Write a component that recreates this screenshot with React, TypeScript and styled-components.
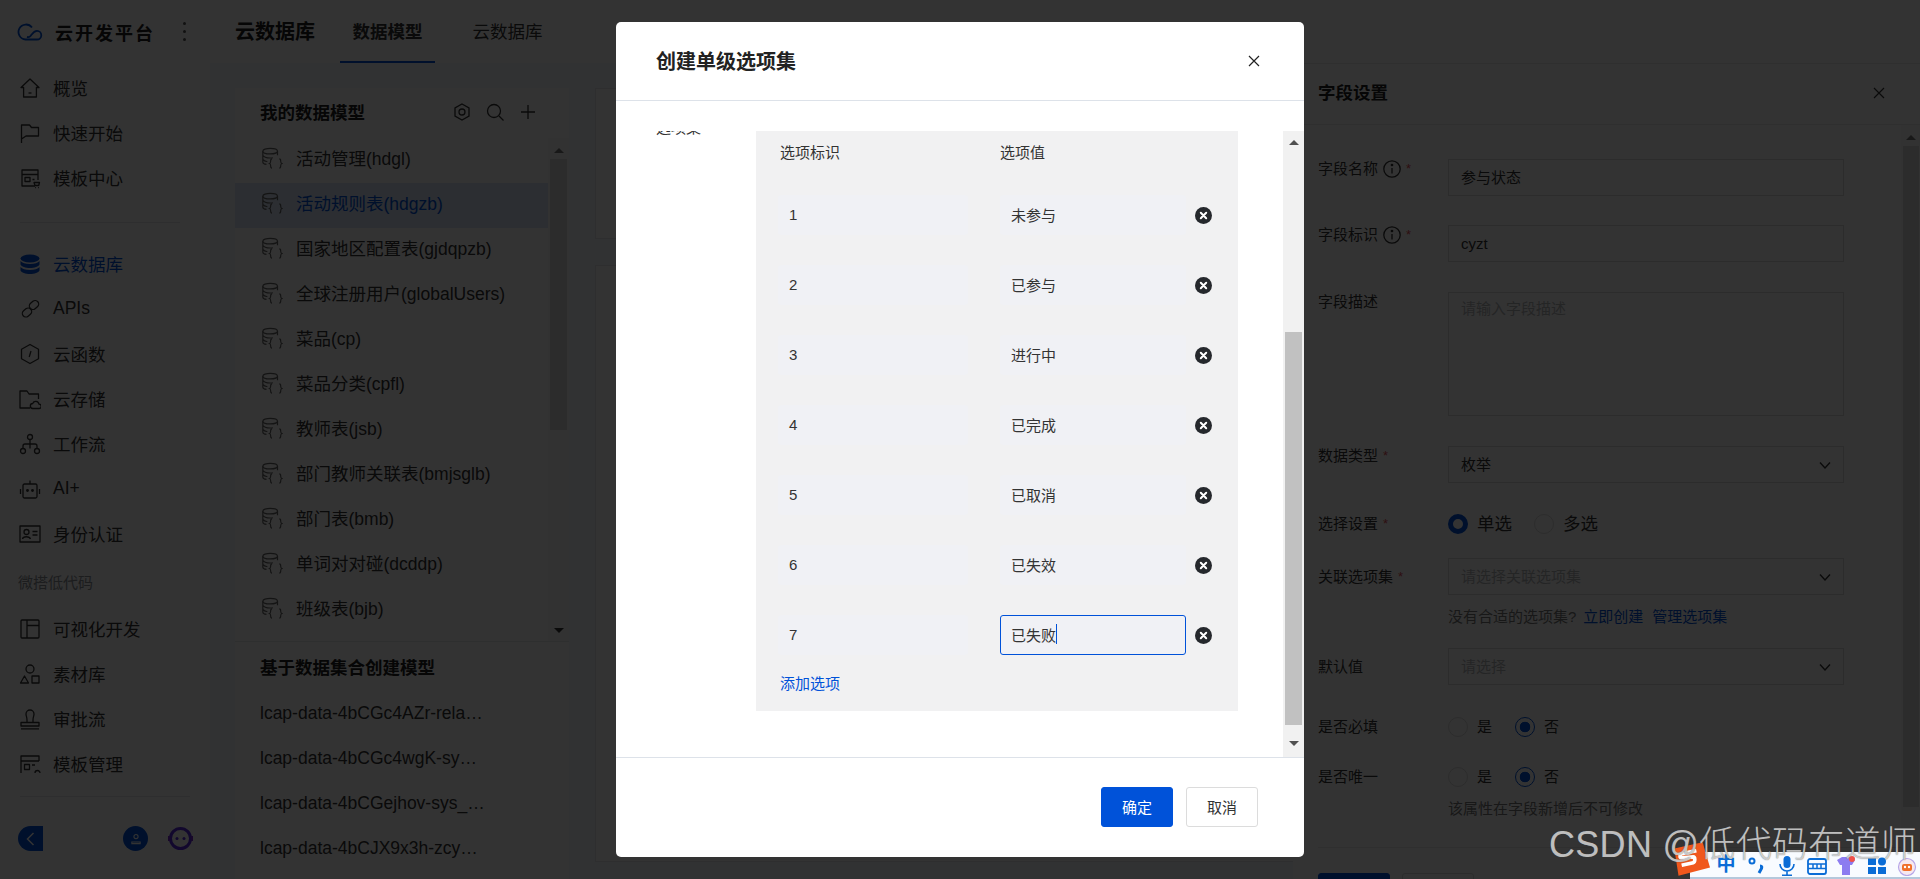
import React from "react";
import styled, { createGlobalStyle } from "styled-components";

const Global = createGlobalStyle`
  html, body { margin: 0; padding: 0; background: #fff; }
  * { box-sizing: border-box; }
  body { font-family: "Liberation Sans", "Noto Sans CJK SC", sans-serif; color: #333; overflow: hidden; }
`;

const Page = styled.div`
  position: relative; width: 1920px; height: 879px; overflow: hidden; display: flex; background: #f4f7fc;
`;
const Sidebar = styled.aside`
  width: 210px; height: 879px; flex: none; background: #fff; display: flex; flex-direction: column;
`;
const Brand = styled.div`
  height: 63px; flex: none; display: flex; align-items: center; padding-left: 17px; position: relative;
`;
const BrandName = styled.span`
  margin-left: 12px; font-size: 18px; font-weight: 700; letter-spacing: 2px; color: #222;
`;
const BrandDots = styled.span`
  margin-left: 28px; display: flex; flex-direction: column; gap: 5px;
  i { width: 3px; height: 3px; border-radius: 50%; background: #555; display: block; }
`;
const NavGroup = styled.nav<{ $top: number }>`
  margin-top: ${(p) => p.$top}px; display: flex; flex-direction: column; flex: none;
`;
const NavItem = styled.div<{ $active?: boolean }>`
  height: 45px; display: flex; align-items: center; padding-left: 19px; font-size: 17.5px;
  color: ${(p) => (p.$active ? "#0052d9" : "#333")};
  svg { width: 22px; height: 22px; flex: none; margin-right: 12px; }
`;
const SideRule = styled.div<{ $w: number; $top: number }>`
  width: ${(p) => p.$w}px; height: 1px; margin: ${(p) => p.$top}px 0 0 20px; background: #e3e6eb; flex: none;
`;
const NavLabel = styled.div`
  margin: 17px 0 0 18px; height: 20px; line-height: 20px; font-size: 15px; color: #8c8f96; flex: none;
`;
const SideFoot = styled.div`
  margin-top: 29px; height: 25px; display: flex; align-items: center; padding-left: 18px; flex: none;
`;
const Collapse = styled.div`
  width: 25px; height: 25px; background: #0052d9; border-radius: 12.5px 0 0 12.5px; display: flex; align-items: center; justify-content: center;
`;
const UserDot = styled.div`
  margin-left: 80px; width: 25px; height: 25px; border-radius: 50%; background: #0052d9; display: flex; align-items: center; justify-content: center;
`;
const RobotDot = styled.div`
  margin-left: 20px; width: 25px; height: 25px;
`;
const Main = styled.main`
  flex: 1; display: flex; flex-direction: column; min-width: 0;
`;
const TopBar = styled.header`
  height: 63px; flex: none; background: #fff; display: flex; align-items: stretch; padding-left: 25px;
`;
const TopTitle = styled.div`
  font-size: 20px; font-weight: 700; color: #222; display: flex; align-items: center; margin-right: 25px; padding-bottom: 2px;
`;
const TopTab = styled.div<{ $on?: boolean }>`
  width: 95px; margin-right: 25px; display: flex; align-items: center; justify-content: center; font-size: 17.5px; padding-bottom: 1px;
  font-weight: ${(p) => (p.$on ? 700 : 400)}; color: #333;
  border-bottom: 2px solid ${(p) => (p.$on ? "#0052d9" : "transparent")};
`;
const Content = styled.div`
  flex: 1; display: flex; padding: 25px 0 0 25px; gap: 26px; min-height: 0;
`;
const ModelPanel = styled.section`
  width: 334px; flex: none; background: #fff; display: flex; flex-direction: column;
`;
const PanelHead = styled.div`
  height: 50px; flex: none; display: flex; align-items: center; padding: 0 31px 3px 25px;
  font-size: 17.5px; font-weight: 700; color: #222;
  span { flex: 1; }
  svg { width: 20px; height: 20px; margin-left: 13px; }
`;
const ListWrap = styled.div`
  height: 504px; flex: none; display: flex; border-bottom: 1px solid #e6e8ec;
`;
const ListRows = styled.div`
  flex: 1; min-width: 0; overflow: hidden;
`;
const ModelRow = styled.div<{ $on?: boolean }>`
  height: 45px; display: flex; align-items: center; padding: 0 0 6px 26px; font-size: 17.5px;
  background: ${(p) => (p.$on ? "#d9e6f9" : "transparent")};
  color: ${(p) => (p.$on ? "#0052d9" : "#333")};
  svg { width: 22px; height: 22px; margin-right: 13px; flex: none; }
`;
const Track = styled.div<{ $w: number; $bg: string }>`
  width: ${(p) => p.$w}px; flex: none; background: ${(p) => p.$bg}; display: flex; flex-direction: column; align-items: center; position: relative;
`;
const Thumb = styled.div<{ $w: number; $top: number; $h: number; $bg: string }>`
  position: absolute; top: ${(p) => p.$top}px; left: 50%; margin-left: ${(p) => -p.$w / 2}px;
  width: ${(p) => p.$w}px; height: ${(p) => p.$h}px; background: ${(p) => p.$bg};
`;
const Arrow = styled.div<{ $dir: "up" | "down"; $top: number; $c: string }>`
  position: absolute; top: ${(p) => p.$top}px; left: 50%; margin-left: -5px; width: 0; height: 0;
  border-left: 5px solid transparent; border-right: 5px solid transparent;
  ${(p) => (p.$dir === "up" ? `border-bottom: 5px solid ${p.$c};` : `border-top: 5px solid ${p.$c};`)}
`;
const DataHead = styled.div`
  height: 49px; flex: none; display: flex; align-items: center; padding-left: 25px; font-size: 17.5px; font-weight: 700; color: #222;
`;
const DataRow = styled.div`
  height: 45px; line-height: 45px; padding-left: 25px; font-size: 17.5px; color: #333; white-space: nowrap; flex: none;
`;
const Center = styled.div`
  flex: 1; display: flex; flex-direction: column; gap: 26px;
`;
const Card = styled.div<{ $h: number }>`
  height: ${(p) => p.$h}px; background: #fff; border: 1px solid #e3e6eb; flex: none;
`;
const Drawer = styled.aside`
  position: absolute; left: 1293px; top: 63px; right: 0; bottom: 0; background: #fff; border-top: 1px solid #e8e8e8;
  display: flex; flex-direction: column;
`;
const DrawerHead = styled.div`
  height: 61px; flex: none; border-bottom: 1px solid #e8e8e8; padding: 0 35px 5px 25px; display: flex; align-items: center; justify-content: space-between;
  font-size: 17.5px; font-weight: 700; color: #222;
  svg { margin-top: 2px; }
`;
const DrawerBody = styled.div`
  flex: 1; display: flex; min-height: 0;
`;
const Form = styled.div`
  width: 608px; flex: none; padding: 34px 0 0 25px; display: flex; flex-direction: column;
`;
const Field = styled.div<{ $gap: number; $top?: boolean }>`
  margin-top: ${(p) => p.$gap}px; display: flex; align-items: ${(p) => (p.$top ? "flex-start" : "center")}; flex: none;
`;
const Label = styled.div`
  width: 130px; flex: none; font-size: 15px; line-height: 20px; color: #333; display: flex; align-items: center;
  b { color: #e34d59; font-weight: 400; margin-left: 5px; font-size: 13px; }
  svg { width: 18px; height: 18px; margin-left: 5px; flex: none; }
`;
const FInput = styled.div<{ $h?: number; $ph?: boolean }>`
  width: 396px; height: ${(p) => p.$h ?? 37}px; border: 1px solid #dcdcdc; padding: ${(p) => (p.$h ? "6px" : "0")} 12px 0; flex: none;
  display: flex; align-items: ${(p) => (p.$h ? "flex-start" : "center")}; justify-content: space-between;
  font-size: 15px; line-height: 20px; color: ${(p) => (p.$ph ? "#b5b7bb" : "#333")};
  svg { width: 14px; height: 14px; margin-right: -1px; }
`;
const Radio = styled.span<{ $on?: boolean; $thick?: boolean }>`
  width: 20px; height: 20px; border-radius: 50%; flex: none; display: inline-block; background: #fff;
  border: ${(p) => (p.$thick ? "5px solid #0052d9" : p.$on ? "1px solid #0052d9" : "1px solid #dcdcdc")};
  ${(p) => p.$on && !p.$thick && "background: radial-gradient(circle, #0052d9 0 5px, #fff 5.6px);"}
`;
const RadioText = styled.span<{ $big?: boolean }>`
  font-size: ${(p) => (p.$big ? 17.5 : 15)}px; margin: 0 ${(p) => (p.$big ? 22 : 23)}px 0 9px; color: #333; line-height: 20px;
`;
const Hint = styled.div<{ $gap: number }>`
  margin: ${(p) => p.$gap}px 0 0 130px; font-size: 15px; line-height: 20px; color: #777; flex: none;
  a { color: #0052d9; margin-left: 7px; }
  a + a { margin-left: 9px; }
`;
const FormRule = styled.div`
  margin-top: 28px; height: 1px; width: 583px; background: #e8e8e8; flex: none;
`;
const FormBtns = styled.div`
  margin-top: 25px; display: flex; gap: 12px; flex: none;
`;
const Button = styled.div<{ $primary?: boolean; $w: number }>`
  width: ${(p) => p.$w}px; height: 40px; flex: none; border-radius: 3px; display: flex; align-items: center; justify-content: center; font-size: 15px; padding-bottom: 1px;
  background: ${(p) => (p.$primary ? "#0052d9" : "#fff")};
  color: ${(p) => (p.$primary ? "#fff" : "#333")};
  border: 1px solid ${(p) => (p.$primary ? "#0052d9" : "#dcdcdc")};
`;
const Overlay = styled.div`
  position: absolute; inset: 0; background: rgba(0, 0, 0, 0.8);
`;
const Modal = styled.div`
  position: absolute; left: 616px; top: 22px; width: 688px; height: 835px; background: #fff; border-radius: 5px; overflow: hidden;
  display: flex; flex-direction: column;
`;
const ModalHead = styled.div`
  height: 79px; flex: none; border-bottom: 1px solid #dde2e9; padding: 0 44px 2px 40px; display: flex; align-items: center; justify-content: space-between;
  font-size: 20px; font-weight: 700; color: #222;
  svg { width: 12px; height: 12px; margin-top: 2px; }
`;
const ModalBody = styled.div`
  height: 656px; flex: none; padding-top: 30px; display: flex;
`;
const Scrolled = styled.div`
  flex: 1; min-width: 0; overflow: hidden; display: flex;
`;
const SetLabel = styled.div`
  width: 140px; flex: none; padding-left: 40px; margin-top: -13px; height: 20px; line-height: 20px; font-size: 15px; color: #333;
  b { color: #e34d59; font-weight: 400; margin-left: 4px; font-size: 13px; }
`;
const OptionPanel = styled.div`
  width: 482px; height: 580px; flex: none; background: #f1f1f2; padding-left: 22px; display: flex; flex-direction: column;
`;
const OptionHead = styled.div`
  height: 40px; margin-bottom: 9px; flex: none; display: flex; align-items: center; font-size: 15px; color: #333; padding-left: 2px;
  span { width: 220px; }
`;
const OptionRow = styled.div`
  height: 70px; flex: none; display: flex; align-items: center;
`;
const OptionInput = styled.div<{ $w: number; $focus?: boolean; $ml?: number }>`
  width: ${(p) => p.$w}px; height: 40px; flex: none; margin-left: ${(p) => p.$ml ?? 0}px; background: #f0f1f5; border-radius: 3px; display: flex; align-items: center;
  padding: 0 0 2px 10px; font-size: 15px; color: #333;
  border: 1px solid ${(p) => (p.$focus ? "#0052d9" : "transparent")};
`;
const Caret = styled.i`
  width: 1px; height: 20px; background: #0052d9; display: block;
`;
const Remove = styled.svg`
  width: 17px; height: 17px; margin-left: 9px; flex: none;
`;
const AddLink = styled.div`
  height: 24px; margin-top: 2px; line-height: 24px; padding-left: 2px; font-size: 15px; color: #0052d9;
`;
const ModalFoot = styled.div`
  flex: 1; border-top: 1px solid #dde2e9; display: flex; justify-content: flex-end; gap: 13px; padding: 29px 46px 0 0;
`;
const Watermark = styled.div`
  position: absolute; left: 1549px; top: 822px; font-size: 36px; line-height: 46px; font-weight: 300; white-space: nowrap;
  font-family: "Liberation Sans", "Noto Sans CJK SC", sans-serif; color: rgba(255, 255, 255, 0.68); text-shadow: 0 0 1px rgba(70, 70, 70, 0.9);
  letter-spacing: 0.3px; z-index: 3;
`;
const ImeBar = styled.div`
  position: absolute; left: 1690px; right: 0; top: 852px; bottom: 0; background: #f8fbff; border-bottom: 2px solid #b4c8dc; z-index: 2;
`;
const ImeTools = styled.div`
  position: absolute; left: 1668px; top: 842px; width: 252px; height: 37px; display: flex; align-items: center; z-index: 2;
`;
const ImeLogo = styled.svg`
  width: 42px; height: 34px; flex: none; margin-top: -3px;
`;
const ImeChar = styled.span`
  margin-left: 6px; width: 20px; font-size: 19px; font-weight: 700; color: #0a6cd6; line-height: 20px; text-align: center; padding-top: 8px;
`;
const ImeIcon = styled.svg<{ $ml: number }>`
  width: 20px; height: 20px; flex: none; margin: 11px 0 0 ${(p) => p.$ml}px;
`;

const S = { fill: "none", stroke: "currentColor", strokeWidth: 1.3, strokeLinejoin: "round" as const };
const nav: Record<string, React.ReactNode> = {
  home: <svg viewBox="0 0 22 22" {...S}><path d="M11 2l9 8.5h-2.6V20H4.6v-9.500H2z" /><path d="M9.500 16h3" /></svg>,
  flag: <svg viewBox="0 0 22 22" {...S}><path d="M2.500 21V3h8l2 2.500h7V14H7l-4.500 3" /></svg>,
  tpl: <svg viewBox="0 0 22 22" {...S}><path d="M16 19H3V3h16v10" /><path d="M3 7.500h16M6 10.500h5v4H6zM13.500 12.500h2" /><path d="M15 15.500h5.500l-.8 3H16zM16 20.600h.8M19 20.600h.8" /></svg>,
  db: <svg viewBox="0 0 22 22" fill="#0052d9"><ellipse cx="11" cy="5.500" rx="9.500" ry="4" /><path d="M1.500 8c1.500 2 5 3 9.500 3s8-1 9.500-3v3.500c-1 2.200-5 3.500-9.500 3.500s-8.500-1.300-9.500-3.500zM1.500 14c1.500 2 5 3 9.500 3s8-1 9.500-3v3.500c-1 2.200-5 3.500-9.500 3.500s-8.500-1.300-9.500-3.500z" /></svg>,
  link: <svg viewBox="0 0 22 22" {...S}><rect x="10" y="3.500" width="10" height="7" rx="3.500" transform="rotate(-40 15 7)" /><rect x="3" y="11" width="10" height="7" rx="3.500" transform="rotate(-40 8 14.500)" /></svg>,
  fn: <svg viewBox="0 0 22 22" {...S}><path d="M11 1.500l8.500 4.800v9.400L11 20.500l-8.500-4.800V6.300z" /><path d="M12 8l-1.800 6" /></svg>,
  folder: <svg viewBox="0 0 22 22" {...S}><path d="M11 20H1V3h7l2 3h9.500v5" /><path d="M14 20.500a2.500 2.500 0 0 1-.3-5 3.300 3.300 0 0 1 6.300.6 2.200 2.200 0 0 1 0 4.400z" /></svg>,
  flow: <svg viewBox="0 0 22 22" {...S}><circle cx="11" cy="4" r="2.500" /><circle cx="4" cy="18" r="2.500" /><circle cx="18" cy="18" r="2.500" /><path d="M11 6.500V15.500M4 15.500v-2.500a2 2 0 0 1 2-2h10a2 2 0 0 1 2 2v2.500" /></svg>,
  bot: <svg viewBox="0 0 22 22" {...S}><rect x="4" y="6" width="14" height="14" rx="1.500" /><path d="M11 6V2.500M1.500 11v5M20.500 11v5" /><circle cx="8.500" cy="12.500" r=".8" fill="currentColor" /><circle cx="13.500" cy="12.500" r=".8" fill="currentColor" /></svg>,
  card: <svg viewBox="0 0 22 22" {...S}><rect x="1" y="3" width="20" height="16" /><circle cx="7.500" cy="9" r="2.500" /><path d="M3.500 16c.5-3 7-3 8 0M13.500 8.500h5M13.500 12h5" /></svg>,
  panel: <svg viewBox="0 0 22 22" {...S}><rect x="2" y="2" width="18" height="18" rx="1" /><path d="M8 2v18M8 7.500h12" /></svg>,
  shape: <svg viewBox="0 0 22 22" {...S}><circle cx="11" cy="6" r="4" /><path d="M5.500 13L9.500 20H1.500zM13 13h7v7h-7z" /></svg>,
  stamp: <svg viewBox="0 0 22 22" {...S}><path d="M2 14.500h18V18H2zM8 14.500V12C8 9 7 8 7 6a4 4 0 0 1 8 0c0 2-1 3-1 6v2.500M2 20.800h18" /></svg>,
  tpl2: <svg viewBox="0 0 22 22" {...S}><path d="M2 20V3h18v5M2 8h18M5.500 11.500h5v5h-5zM13 12h3" /><path d="M16 20a2.500 2.500 0 0 1 5 0" /></svg>,
};

const ModelIcon = () => (
  <svg viewBox="0 0 24 24" fill="none" stroke="#666" strokeWidth="1.300">
    <ellipse cx="10" cy="4.500" rx="8" ry="3" />
    <path d="M2 4.500v12c0 1 1.500 2 4 2.500M18 4.500V9M2 9c1 2 4 3 8 3 1 0 2 0 3-.3M2 13.500c1 1.500 3 2.300 5 2.600" />
    <path d="M12 13c-1.500 0-1.500 1-1.500 2.500s0 2-1.200 2.500c1.200.500 1.200 1 1.200 2.500s0 2.500 1.500 2.500M20 13c1.500 0 1.500 1 1.500 2.500s0 2 1.200 2.500c-1.200.500-1.200 1-1.200 2.500s0 2.500-1.500 2.500" />
  </svg>
);
const Info = () => (
  <svg viewBox="0 0 18 18" fill="none" stroke="#333" strokeWidth="1.300"><circle cx="9" cy="9" r="8.200" /><path d="M9 8v5.500" /><circle cx="9" cy="5" r=".7" fill="#333" /></svg>
);
const Chevron = () => (
  <svg viewBox="0 0 14 14" fill="none" stroke="#333" strokeWidth="1.400"><path d="M2 4.500l5 5.500 5-5.500" /></svg>
);
const Cross = ({ c = "#222" }: { c?: string }) => (
  <svg viewBox="0 0 12 12" fill="none" stroke={c} strokeWidth="1.200" width="12" height="12"><path d="M1 1l10 10M11 1L1 11" /></svg>
);

const topNav = [["home", "概览"], ["flag", "快速开始"], ["tpl", "模板中心"]];
const midNav = [["db", "云数据库"], ["link", "APIs"], ["fn", "云函数"], ["folder", "云存储"], ["flow", "工作流"], ["bot", "AI+"], ["card", "身份认证"]];
const lowNav = [["panel", "可视化开发"], ["shape", "素材库"], ["stamp", "审批流"], ["tpl2", "模板管理"]];
const models = ["活动管理(hdgl)", "活动规则表(hdgzb)", "国家地区配置表(gjdqpzb)", "全球注册用户(globalUsers)", "菜品(cp)", "菜品分类(cpfl)", "教师表(jsb)", "部门教师关联表(bmjsglb)", "部门表(bmb)", "单词对对碰(dcddp)", "班级表(bjb)", ""];
const datasets = ["lcap-data-4bCGc4AZr-rela…", "lcap-data-4bCGc4wgK-sy…", "lcap-data-4bCGejhov-sys_…", "lcap-data-4bCJX9x3h-zcy…"];
const options = ["未参与", "已参与", "进行中", "已完成", "已取消", "已失效", "已失败"];

export default function App() {
  return (
    <Page>
      <Global />
      <Sidebar>
        <Brand>
          <svg width="26" height="19" viewBox="0 0 26 19" fill="none" stroke="#0052d9" strokeWidth="1.800">
            <path d="M15 5.500A7.500 7.500 0 1 0 8.500 17.500H20a4.300 4.300 0 0 0 0-8.600c-3 0-4.500 2.500-6 4.500-1 1.400-2.500 2-4 1.500" />
          </svg>
          <BrandName>云开发平台</BrandName>
          <BrandDots><i /><i /><i /></BrandDots>
        </Brand>
        <NavGroup $top={2}>
          {topNav.map(([k, t]) => <NavItem key={t}>{nav[k]}{t}</NavItem>)}
        </NavGroup>
        <SideRule $w={160} $top={22} />
        <NavGroup $top={18}>
          {midNav.map(([k, t], i) => <NavItem key={t} $active={i === 0}>{nav[k]}{t}</NavItem>)}
        </NavGroup>
        <NavLabel>微搭低代码</NavLabel>
        <NavGroup $top={13}>
          {lowNav.map(([k, t]) => <NavItem key={t}>{nav[k]}{t}</NavItem>)}
        </NavGroup>
        <SideRule $w={170} $top={10} />
        <SideFoot>
          <Collapse><svg width="9" height="14" viewBox="0 0 9 14" fill="none" stroke="#fff" strokeWidth="1.500"><path d="M7.500 1L1.500 7l6 6" /></svg></Collapse>
          <UserDot><svg width="10" height="12" viewBox="0 0 12 14" fill="none" stroke="#fff" strokeWidth="1.300"><circle cx="6" cy="4" r="2.500" /><path d="M1 12.500V10.500h10v2z" /></svg></UserDot>
          <RobotDot>
            <svg width="25" height="25" viewBox="0 0 25 25" fill="none">
              <circle cx="12.500" cy="12.500" r="10" stroke="#5a28e0" strokeWidth="3" />
              <path d="M1 10v5M24 10v5" stroke="#7a2ad0" strokeWidth="2" />
              <circle cx="9" cy="12.500" r="1.500" fill="#5a28e0" /><circle cx="16" cy="12.500" r="1.500" fill="#5a28e0" />
            </svg>
          </RobotDot>
        </SideFoot>
      </Sidebar>
      <Main>
        <TopBar>
          <TopTitle>云数据库</TopTitle>
          <TopTab $on>数据模型</TopTab>
          <TopTab>云数据库</TopTab>
        </TopBar>
        <Content>
          <ModelPanel>
            <PanelHead>
              <span>我的数据模型</span>
              <svg viewBox="0 0 20 20" fill="none" stroke="#333" strokeWidth="1.300"><path d="M10 2l7 4v8l-7 4-7-4V6z" /><circle cx="10" cy="10" r="3" /></svg>
              <svg viewBox="0 0 20 20" fill="none" stroke="#333" strokeWidth="1.300"><circle cx="9" cy="9" r="6.500" /><path d="M14 14l4.500 4.500" /></svg>
              <svg viewBox="0 0 20 20" fill="none" stroke="#333" strokeWidth="1.300"><path d="M10 3v14M3 10h14" /></svg>
            </PanelHead>
            <ListWrap>
              <ListRows>
                {models.map((m, i) => <ModelRow key={i} $on={i === 1}><ModelIcon />{m}</ModelRow>)}
              </ListRows>
              <Track $w={21} $bg="#fbfbfb">
                <Arrow $dir="up" $top={10} $c="#777" />
                <Thumb $w={17} $top={21} $h={271} $bg="#dcdcdc" />
                <Arrow $dir="down" $top={490} $c="#333" />
              </Track>
            </ListWrap>
            <DataHead>基于数据集合创建模型</DataHead>
            {datasets.map((d) => <DataRow key={d}>{d}</DataRow>)}
          </ModelPanel>
          <Center>
            <Card $h={151} />
            <Card $h={597} />
          </Center>
        </Content>
      </Main>
      <Drawer>
        <DrawerHead>字段设置<Cross c="#333" /></DrawerHead>
        <DrawerBody>
          <Form>
            <Field $gap={0} $top><Label>字段名称<Info /><b>*</b></Label><FInput>参与状态</FInput></Field>
            <Field $gap={29} $top><Label>字段标识<Info /><b>*</b></Label><FInput>cyzt</FInput></Field>
            <Field $gap={30} $top><Label>字段描述</Label><FInput $h={124} $ph>请输入字段描述</FInput></Field>
            <Field $gap={30} $top><Label>数据类型<b>*</b></Label><FInput>枚举<Chevron /></FInput></Field>
            <Field $gap={31}>
              <Label>选择设置<b>*</b></Label>
              <Radio $on $thick /><RadioText $big>单选</RadioText>
              <Radio /><RadioText $big>多选</RadioText>
            </Field>
            <Field $gap={24}><Label>关联选项集<b>*</b></Label><FInput $ph>请选择关联选项集<Chevron /></FInput></Field>
            <Hint $gap={12}>没有合适的选项集?<a>立即创建</a><a>管理选项集</a></Hint>
            <Field $gap={21}><Label>默认值</Label><FInput $ph>请选择<Chevron /></FInput></Field>
            <Field $gap={32}>
              <Label>是否必填</Label>
              <Radio /><RadioText>是</RadioText>
              <Radio $on /><RadioText>否</RadioText>
            </Field>
            <Field $gap={30}>
              <Label>是否唯一</Label>
              <Radio /><RadioText>是</RadioText>
              <Radio $on /><RadioText>否</RadioText>
            </Field>
            <Hint $gap={12}>该属性在字段新增后不可修改</Hint>
            <FormRule />
            <FormBtns><Button $primary $w={72} /><Button $w={72} /></FormBtns>
          </Form>
          <Track $w={19} $bg="#f8f8f8">
            <Arrow $dir="up" $top={10} $c="#777" />
            <Thumb $w={16} $top={21} $h={661} $bg="#dcdcdc" />
          </Track>
        </DrawerBody>
      </Drawer>
      <Overlay />
      <Modal>
        <ModalHead>创建单级选项集<Cross /></ModalHead>
        <ModalBody>
          <Scrolled>
            <SetLabel>选项集<b>*</b></SetLabel>
            <OptionPanel>
              <OptionHead><span>选项标识</span><span>选项值</span></OptionHead>
              {options.map((o, i) => (
                <OptionRow key={i}>
                  <OptionInput $w={190}>{i + 1}</OptionInput>
                  <OptionInput $w={186} $ml={32} $focus={i === 6}>{o}{i === 6 && <Caret />}</OptionInput>
                  <Remove viewBox="0 0 17 17">
                    <circle cx="8.500" cy="8.500" r="8.500" fill="#25282c" />
                    <path d="M5.800 5.800l5.400 5.400M11.200 5.800l-5.400 5.400" stroke="#fff" strokeWidth="2" strokeLinecap="round" />
                  </Remove>
                </OptionRow>
              ))}
              <AddLink>添加选项</AddLink>
            </OptionPanel>
          </Scrolled>
          <Track $w={21} $bg="#f1f1f1">
            <Arrow $dir="up" $top={9} $c="#505050" />
            <Thumb $w={17} $top={201} $h={393} $bg="#c1c1c1" />
            <Arrow $dir="down" $top={610} $c="#505050" />
          </Track>
        </ModalBody>
        <ModalFoot>
          <Button $primary $w={72}>确定</Button>
          <Button $w={72}>取消</Button>
        </ModalFoot>
      </Modal>
      <ImeBar />
      <ImeTools>
        <ImeLogo viewBox="0 0 40 32">
          <path d="M6 6L33 0l7 24-30 8z" fill="#f0571c" />
          <path d="M27 8l-14 3c-2 .500-2 4 0 4l11-1c2 0 2 5 0 5.500L13 22" fill="none" stroke="#fff" strokeWidth="3.500" />
        </ImeLogo>
        <ImeChar>中</ImeChar>
        <ImeIcon $ml={11} viewBox="0 0 20 20"><circle cx="5" cy="5" r="2.500" fill="none" stroke="#0a6cd6" strokeWidth="2" /><path d="M13 10c2 0 2 1 1.500 2.500L12 17" stroke="#0a6cd6" strokeWidth="3" fill="none" /></ImeIcon>
        <ImeIcon $ml={10} viewBox="0 0 20 20"><rect x="6.500" y="0" width="7" height="12" rx="3.500" fill="#0a6cd6" /><path d="M3 8a7 7 0 0 0 14 0M10 15v4M5 19.300h10" stroke="#0a6cd6" strokeWidth="1.600" fill="none" /></ImeIcon>
        <ImeIcon $ml={10} viewBox="0 0 20 20"><rect x="1" y="3" width="18" height="15" rx="2" fill="none" stroke="#0a6cd6" strokeWidth="1.800" /><path d="M1 8h18M1 12.500h18M6 8v4.500M10 8v4.500M14 8v4.500" stroke="#0a6cd6" strokeWidth="1.500" /></ImeIcon>
        <ImeIcon $ml={9} viewBox="0 0 20 20"><path d="M1 4l5-3h8l5 3-3 5h-2v10H6V9H4z" fill="#8c7cf0" /><circle cx="16" cy="3" r="3" fill="#f0504a" /></ImeIcon>
        <ImeIcon $ml={11} viewBox="0 0 20 20"><path d="M1 2h8v7H1zM1 11h8v7H1zM11 11h8v7h-8z" fill="#0a6cd6" /><circle cx="15" cy="5.500" r="4" fill="#0a6cd6" /></ImeIcon>
        <ImeIcon $ml={10} viewBox="0 0 20 20"><circle cx="10" cy="11" r="8.500" fill="#f6e8ef" stroke="#b6a6e8" strokeWidth="1.200" /><rect x="5" y="8" width="10" height="7" rx="2" fill="#f0702a" /><circle cx="8" cy="11" r="1.200" fill="#fff" /><circle cx="12" cy="11" r="1.200" fill="#fff" /></ImeIcon>
      </ImeTools>
      <Watermark>CSDN @低代码布道师</Watermark>
    </Page>
  );
}
